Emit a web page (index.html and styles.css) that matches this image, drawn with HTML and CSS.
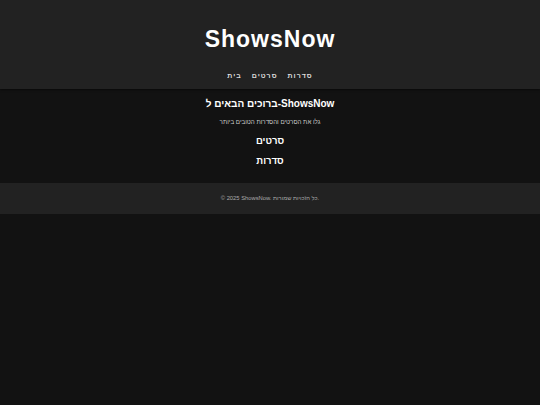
FILE: index.html
```html
<!DOCTYPE html>
<html lang="he">
<head>
<meta charset="utf-8">
<title>ShowsNow</title>
<link rel="stylesheet" href="styles.css">
</head>
<body>
<header class="site-header">
  <h1 class="logo">ShowsNow</h1>
  <nav class="nav">
    <a href="#" class="nav-link">בית</a>
    <a href="#" class="nav-link">סרטים</a>
    <a href="#" class="nav-link">סדרות</a>
  </nav>
</header>
<main class="content">
  <h2 class="welcome">ברוכים הבאים ל-ShowsNow</h2>
  <p class="tagline">גלו את הסרטים והסדרות הטובים ביותר</p>
  <a href="#" class="section-link">סרטים</a>
  <a href="#" class="section-link">סדרות</a>
</main>
<footer class="site-footer">
  <p class="copyright">© 2025 ShowsNow. כל הזכויות שמורות.</p>
</footer>
</body>
</html>
```
FILE: styles.css
```css
html, body {
  margin: 0;
  padding: 0;
  background: #121212;
  color: #fff;
  font-family: "Liberation Sans", Arial, sans-serif;
}
.site-header {
  background: #222;
  padding: 23px 0 7px;
  text-align: center;
  box-shadow: 0 1px 2px rgba(0,0,0,0.5);
}
.logo {
  margin: 0;
  font-size: 23px;
  line-height: 32px;
  font-weight: bold;
  letter-spacing: 1px;
  color: #fff;
}
.nav {
  display: flex;
  justify-content: center;
  gap: 10px;
  margin-top: 14px;
}
.nav-link {
  color: #ddd;
  text-decoration: none;
  font-size: 7px;
  line-height: 13px;
  letter-spacing: 1px;
  font-weight: bold;
}
.content {
  display: flex;
  flex-direction: column;
  align-items: center;
  padding: 8px 0 12px;
}
.welcome {
  margin: 0;
  font-size: 10px;
  line-height: 14px;
  font-weight: bold;
}
.tagline {
  margin: 6px 0 4px;
  font-size: 6.2px;
  line-height: 10px;
  color: #ccc;
}
.section-link {
  color: #fff;
  text-decoration: none;
  font-weight: bold;
  font-size: 9.5px;
  line-height: 20px;
}
.site-footer {
  background: #222;
  text-align: center;
  padding: 10px 0;
}
.copyright {
  margin: 0;
  font-size: 5.8px;
  line-height: 11px;
  color: #aaa;
}
```
